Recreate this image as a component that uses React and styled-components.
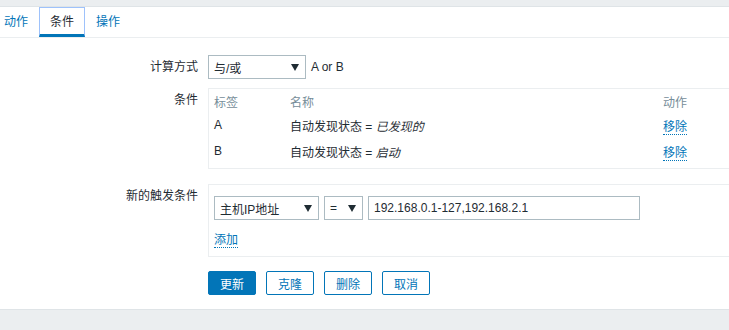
import React from "react";
import styled, { createGlobalStyle } from "styled-components";

const Global = createGlobalStyle`
  html, body { margin: 0; padding: 0; }
  body {
    background: #ebeef0;
    font-family: "Liberation Sans", Arial, "Noto Sans CJK SC", sans-serif;
    font-size: 12px;
    color: #1f2c33;
    overflow: hidden;
  }
  * { box-sizing: border-box; }
`;

const Page = styled.div`
  padding-top: 6px;
  height: 330px;
`;

const Panel = styled.div`
  background: #fff;
  border-top: 1px solid #dfe4e7;
  border-bottom: 1px solid #dfe4e7;
  overflow: hidden;
`;

const TabBar = styled.ul`
  display: flex;
  list-style: none;
  margin: 0 0 0 -7px;
  padding: 0;
  height: 31px;
  border-bottom: 1px solid #ebeef0;
`;

const Tab = styled.li`
  height: 30px;
  line-height: 28px;
  padding: 0 10px;
  border: 1px solid ${(p) => (p.$active ? "#9ec2fb" : "transparent")};
  border-bottom: ${(p) => (p.$active ? "3px solid #0275b8" : "1px solid transparent")};
  color: ${(p) => (p.$active ? "#1f2c33" : "#0275b8")};
  cursor: pointer;
`;

const Form = styled.div`
  display: grid;
  grid-template-columns: 198px 1fr;
  column-gap: 10px;
  padding: 17px 0 14px;
`;

const Label = styled.div`
  text-align: right;
  line-height: 14px;
  padding-top: 5px;
  white-space: nowrap;
  margin-top: ${(p) => p.$space || 0}px;
`;

const Field = styled.div`
  display: flex;
  align-items: center;
  gap: 5px;
  margin-top: ${(p) => p.$space || 0}px;
  min-width: 0;
`;

const FakeSelect = styled.div`
  display: flex;
  align-items: center;
  justify-content: space-between;
  width: ${(p) => p.$w}px;
  height: 24px;
  padding: 0 6px 0 5px;
  border: 1px solid #acbbc2;
  background: #fff;
  flex-shrink: 0;
`;

const Arrow = styled.span`
  width: 0;
  height: 0;
  border-left: 4px solid transparent;
  border-right: 4px solid transparent;
  border-top: 7px solid #1f2c33;
`;

const Hint = styled.span`
  line-height: 14px;
`;

const Box = styled.div`
  width: 540px;
  flex-shrink: 0;
  border: 1px solid #ebeef0;
  padding: ${(p) => p.$pad};
`;

const Table = styled.table`
  border-collapse: collapse;
  width: 100%;
`;

const Th = styled.th`
  text-align: left;
  font-weight: normal;
  color: #768d99;
  height: 22px;
  padding: 0 5px;
  width: ${(p) => p.$w || "auto"};
`;

const Td = styled.td`
  height: 26px;
  padding: 0 5px;
`;

const Em = styled.em`
  font-style: italic;
`;

const Link = styled.span`
  color: #0275b8;
  border-bottom: 1px dotted #0275b8;
  cursor: pointer;
`;

const Input = styled.input`
  width: 272px;
  height: 24px;
  border: 1px solid #acbbc2;
  padding: 0 5px;
  font: inherit;
  color: #1f2c33;
  flex-shrink: 0;
`;

const AddRow = styled.div`
  margin-top: 13px;
  line-height: 14px;
`;

const Buttons = styled.div`
  display: flex;
  gap: 10px;
  margin-top: 14px;
`;

const Button = styled.button`
  width: 48px;
  height: 24px;
  padding: 0;
  border: 1px solid #0275b8;
  border-radius: 2px;
  background: ${(p) => (p.$primary ? "#0275b8" : "#fff")};
  color: ${(p) => (p.$primary ? "#fff" : "#0275b8")};
  font: inherit;
  cursor: pointer;
`;

const Spacer = styled.div``;

export default function App() {
  return (
    <>
      <Global />
      <Page>
        <Panel>
          <TabBar>
            <Tab>动作</Tab>
            <Tab $active>条件</Tab>
            <Tab>操作</Tab>
          </TabBar>
          <Form>
            <Label>计算方式</Label>
            <Field>
              <FakeSelect $w={98}>
                <span>与/或</span>
                <Arrow />
              </FakeSelect>
              <Hint>A or B</Hint>
            </Field>

            <Label $space={9}>条件</Label>
            <Field $space={9}>
              <Box $pad="1px 0 4px">
                <Table>
                  <thead>
                    <tr>
                      <Th $w="76px">标签</Th>
                      <Th $w="373px">名称</Th>
                      <Th>动作</Th>
                    </tr>
                  </thead>
                  <tbody>
                    <tr>
                      <Td>A</Td>
                      <Td>
                        自动发现状态 = <Em>已发现的</Em>
                      </Td>
                      <Td>
                        <Link>移除</Link>
                      </Td>
                    </tr>
                    <tr>
                      <Td>B</Td>
                      <Td>
                        自动发现状态 = <Em>启动</Em>
                      </Td>
                      <Td>
                        <Link>移除</Link>
                      </Td>
                    </tr>
                  </tbody>
                </Table>
              </Box>
            </Field>

            <Label $space={15}>新的触发条件</Label>
            <Field $space={15}>
              <Box $pad="11px 5px 9px">
                <Field>
                  <FakeSelect $w={105}>
                    <span>主机IP地址</span>
                    <Arrow />
                  </FakeSelect>
                  <FakeSelect $w={39}>
                    <span>=</span>
                    <Arrow />
                  </FakeSelect>
                  <Input defaultValue="192.168.0.1-127,192.168.2.1" />
                </Field>
                <AddRow>
                  <Link>添加</Link>
                </AddRow>
              </Box>
            </Field>

            <Spacer />
            <Buttons>
              <Button $primary>更新</Button>
              <Button>克隆</Button>
              <Button>删除</Button>
              <Button>取消</Button>
            </Buttons>
          </Form>
        </Panel>
      </Page>
    </>
  );
}
